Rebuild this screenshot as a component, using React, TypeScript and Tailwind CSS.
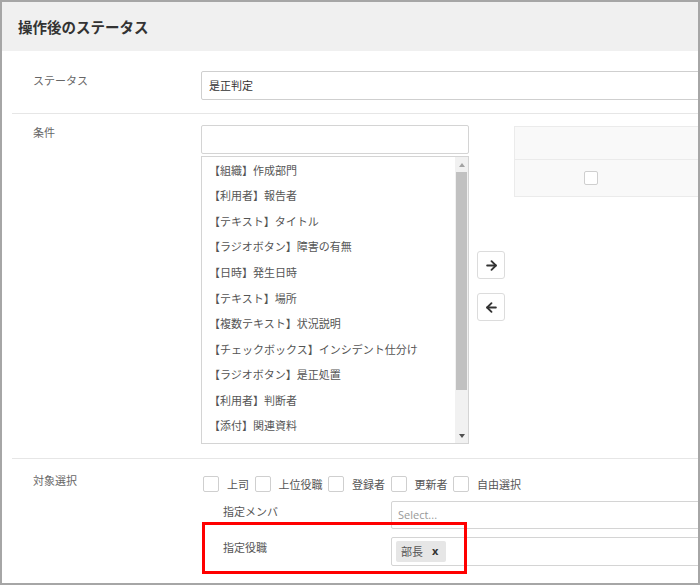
import React from "react";
import { ArrowRight, ArrowLeft } from "lucide-react";

const items = [
  "【組織】作成部門",
  "【利用者】報告者",
  "【テキスト】タイトル",
  "【ラジオボタン】障害の有無",
  "【日時】発生日時",
  "【テキスト】場所",
  "【複数テキスト】状況説明",
  "【チェックボックス】インシデント仕分け",
  "【ラジオボタン】是正処置",
  "【利用者】判断者",
  "【添付】関連資料",
];

const checks = ["上司", "上位役職", "登録者", "更新者", "自由選択"];

export default function App() {
  return (
    <div className="relative w-[700px] h-[585px] border-2 border-[#a6a6a6] bg-white overflow-hidden font-['Noto_Sans_CJK_JP','Noto_Sans',sans-serif]">
      <div className="h-[49px] bg-[#f0f0f0] pl-[16px] flex items-center text-[14.5px] font-bold text-[#333]">
        操作後のステータス
      </div>
      <div className="pl-[10px]">
        {/* Row 1 */}
        <div className="flex h-[63px] border-b border-[#e6e6e6]">
          <div className="w-[189px] shrink-0 pl-[21px] pt-[21px] text-[11px] leading-[16px] text-[#666]">
            ステータス
          </div>
          <div className="mt-[20px] h-[29px] w-[600px] shrink-0 border border-[#cfcfcf] rounded-[2px] pl-[7px] flex items-center text-[11px] text-[#333]">
            是正判定
          </div>
        </div>
        {/* Row 2 */}
        <div className="flex h-[345px] border-b border-[#e6e6e6]">
          <div className="w-[189px] shrink-0 pl-[21px] pt-[10px] text-[11px] leading-[16px] text-[#666]">
            条件
          </div>
          <div className="mt-[11px] flex flex-col w-[268px] shrink-0">
            <div className="h-[29px] border border-[#d4d4d4] rounded-[2px]" />
            <div className="mt-[2px] h-[288px] border border-[#d4d4d4] flex">
              <div className="flex-1 pl-[7px] text-[11px] text-[#555]">
                {items.map((t) => (
                  <div key={t} className="h-[25.6px] flex items-center whitespace-nowrap">
                    {t}
                  </div>
                ))}
              </div>
              <div className="w-[13px] bg-[#f1f1f1] flex flex-col">
                <div className="h-[15px] flex items-center justify-center">
                  <div className="w-0 h-0 border-l-[3.5px] border-r-[3.5px] border-b-[4px] border-l-transparent border-r-transparent border-b-[#a3a3a3]" />
                </div>
                <div className="h-[218px] mx-[1px] bg-[#c1c1c1]" />
                <div className="flex-1" />
                <div className="h-[15px] flex items-center justify-center">
                  <div className="w-0 h-0 border-l-[3.5px] border-r-[3.5px] border-t-[4px] border-l-transparent border-r-transparent border-t-[#505050]" />
                </div>
              </div>
            </div>
          </div>
          <div className="ml-[8px] flex flex-col justify-center gap-[14px]">
            <div className="w-[28px] h-[28px] border border-[#dcdcdc] rounded-[3px] flex items-center justify-center text-[#333]">
              <ArrowRight size={15} strokeWidth={3} />
            </div>
            <div className="w-[28px] h-[28px] border border-[#dcdcdc] rounded-[3px] flex items-center justify-center text-[#333]">
              <ArrowLeft size={15} strokeWidth={3} />
            </div>
          </div>
          <div className="ml-[9px] mt-[12px] self-start w-[300px] shrink-0 border border-[#ebebeb] bg-[#f9f9f9]">
            <div className="h-[33px] border-b border-[#ebebeb]" />
            <div className="h-[36px] flex">
              <div className="w-[152px] flex items-center justify-center">
                <div className="w-[14px] h-[14px] border border-[#cfcfcf] rounded-[2px] bg-white" />
              </div>
            </div>
          </div>
        </div>
        {/* Row 3 */}
        <div className="flex">
          <div className="w-[189px] shrink-0 pl-[21px] pt-[13px] text-[11px] leading-[16px] text-[#666]">
            対象選択
          </div>
          <div className="pt-[17px] flex flex-col">
            <div className="ml-[2px] h-[16px] flex items-center text-[11px] text-[#555]">
              {checks.map((c) => (
                <div key={c} className="flex items-center">
                  <div className="w-[16px] h-[16px] border border-[#cfcfcf] rounded-[2px] bg-white" />
                  <span className="ml-[8px] mr-[5.5px] whitespace-nowrap">{c}</span>
                </div>
              ))}
            </div>
            <div className="mt-[9px] flex">
              <div className="w-[190px] shrink-0 pl-[22px] pt-[2px] text-[11px] leading-[16px] text-[#555]">
                指定メンバ
              </div>
              <div className="h-[28px] w-[400px] shrink-0 border border-[#d4d4d4] rounded-[2px] pl-[6px] flex items-center text-[11px] text-[#999] font-['Open_Sans','Noto_Sans',sans-serif]">
                Select...
              </div>
            </div>
            <div className="mt-[8px] flex">
              <div className="w-[190px] shrink-0 pl-[22px] pt-[2px] text-[11px] leading-[16px] text-[#555]">
                指定役職
              </div>
              <div className="h-[29px] w-[400px] shrink-0 border border-[#d4d4d4] rounded-[2px] pl-[4px] flex items-center">
                <div className="h-[21px] w-[50px] bg-[#e6e6e6] rounded-[2px] pl-[5px] flex items-center text-[11px] text-[#555]">
                  <span>部長</span>
                  <span className="ml-[9px] text-[11px] font-bold text-[#333] font-['Noto_Sans',sans-serif]">x</span>
                </div>
              </div>
            </div>
          </div>
        </div>
      </div>
      <div className="absolute left-[200px] top-[520px] w-[265px] h-[52px] border-[3px] border-[#ff0000]" />
    </div>
  );
}
